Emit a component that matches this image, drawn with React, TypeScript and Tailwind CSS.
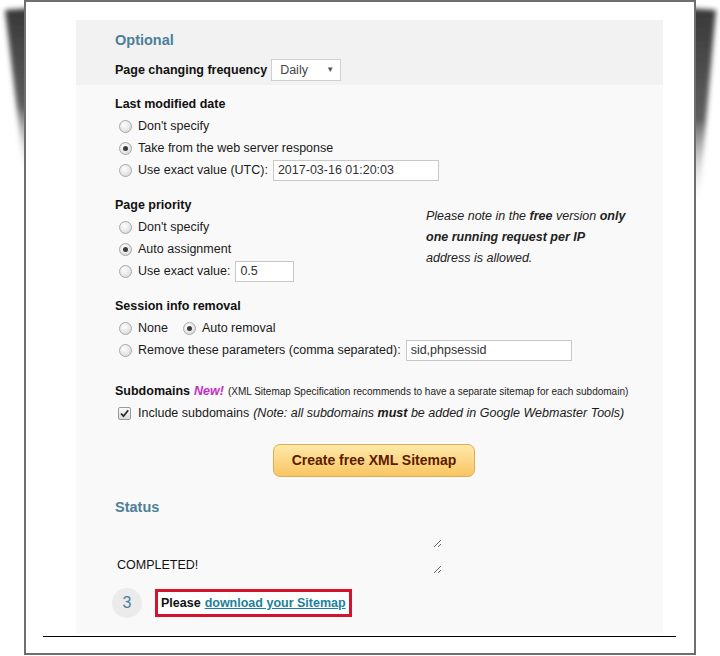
import React from "react";

const Radio = ({ checked }: { checked?: boolean }) => (
  <span className="inline-flex h-[13px] w-[13px] shrink-0 items-center justify-center rounded-full border border-[#a8a8a8] bg-[radial-gradient(circle_at_40%_35%,#ffffff,#d2d2d2)]">
    {checked && <span className="h-[5px] w-[5px] rounded-full bg-[#3c3c3c]" />}
  </span>
);

const Checkbox = () => (
  <span className="inline-flex h-[13px] w-[13px] shrink-0 items-center justify-center rounded-[2px] border border-[#9a9a9a] bg-[linear-gradient(#fafafa,#dcdcdc)]">
    <svg width="11" height="11" viewBox="0 0 11 11">
      <path d="M2 5.5 L4.5 8.2 L9.2 2.2" fill="none" stroke="#2a2a2a" strokeWidth="1.8" />
    </svg>
  </span>
);

const RadioRow = ({ checked, children }: { checked?: boolean; children: React.ReactNode }) => (
  <div className="flex h-[22px] items-center pl-[4px]">
    <Radio checked={checked} />
    <span className="ml-[6px] flex items-center whitespace-nowrap">{children}</span>
  </div>
);

const Heading = ({ children }: { children: React.ReactNode }) => (
  <div className="h-[20px] text-[12.5px] font-bold leading-[20px] text-[#111]">{children}</div>
);

export default function App() {
  return (
    <div className="relative h-[656px] w-[720px] overflow-hidden bg-white font-['Liberation_Sans',Arial,sans-serif] text-[12.5px] text-[#1a1a1a]">
      {/* curl shadows behind frame */}
      <svg className="absolute left-0 top-0" width="720" height="656">
        <defs>
          <filter id="sh" x="-50%" y="-50%" width="200%" height="200%">
            <feGaussianBlur stdDeviation="2.5" />
          </filter>
          <linearGradient id="gl" x1="0" y1="0" x2="0" y2="1">
            <stop offset="0" stopColor="#383838" />
            <stop offset="0.55" stopColor="#5e5e5e" />
            <stop offset="1" stopColor="#ffffff" stopOpacity="0" />
          </linearGradient>
        </defs>
        <polygon points="5,10 34,8 34,185 26,185" fill="url(#gl)" filter="url(#sh)" />
        <polygon points="686,8 716,10 698,210 686,210" fill="url(#gl)" filter="url(#sh)" />
      </svg>

      <div className="relative ml-[24px] h-[655px] w-[672px] border-2 border-[#6e6e6e] bg-white">
        <div className="ml-[17px] w-[633px] pt-[18px]">
          <div className="ml-[33px] w-[587px] bg-[#f9f9f9]">
            {/* header band */}
            <div className="bg-[#f2f2f2] pb-[4px] pl-[39px] pt-[10px]">
              <div className="h-[20px] text-[14.5px] font-bold leading-[20px] text-[#4d7f99]">Optional</div>
              <div className="mt-[9px] flex h-[22px] items-center">
                <span className="font-bold text-[#111]">Page changing frequency</span>
                <div className="ml-[4px] flex h-[22px] w-[70px] items-center justify-between border border-[#cfcfcf] bg-white pl-[8px] pr-[6px] text-[#444]">
                  <span>Daily</span>
                  <span className="text-[8px] text-[#555]">▼</span>
                </div>
              </div>
            </div>

            <div className="pl-[39px] pt-[9px]">
              <Heading>Last modified date</Heading>
              <div className="mt-[1px]">
                <RadioRow>Don't specify</RadioRow>
                <RadioRow checked>Take from the web server response</RadioRow>
                <RadioRow>
                  Use exact value (UTC):
                  <span className="ml-[5px] flex h-[21px] w-[166px] items-center border border-[#c8c8c8] bg-white px-[4px] text-[#333]">
                    2017-03-16 01:20:03
                  </span>
                </RadioRow>
              </div>

              <div className="mt-[14px] flex">
                <div className="w-[311px]">
                  <Heading>Page priority</Heading>
                  <div className="mt-[1px]">
                    <RadioRow>Don't specify</RadioRow>
                    <RadioRow checked>Auto assignment</RadioRow>
                    <RadioRow>
                      Use exact value:
                      <span className="ml-[5px] flex h-[21px] w-[59px] items-center border border-[#c8c8c8] bg-white px-[4px] text-[#333]">
                        0.5
                      </span>
                    </RadioRow>
                  </div>
                </div>
                <div className="mt-[11px] whitespace-nowrap italic leading-[21px] text-[#222]">
                  Please note in the <b>free</b> version <b>only</b>
                  <br />
                  <b>one running request per IP</b>
                  <br />
                  address is allowed.
                </div>
              </div>

              <div className="mt-[14px]">
                <Heading>Session info removal</Heading>
                <div className="mt-[1px]">
                  <div className="flex h-[22px] items-center pl-[4px]">
                    <Radio />
                    <span className="ml-[6px]">None</span>
                    <span className="ml-[15px] flex">
                      <Radio checked />
                    </span>
                    <span className="ml-[6px]">Auto removal</span>
                  </div>
                  <RadioRow>
                    Remove these parameters (comma separated):
                    <span className="ml-[5px] flex h-[21px] w-[166px] items-center border border-[#c8c8c8] bg-white px-[4px] text-[#333]">
                      sid,phpsessid
                    </span>
                  </RadioRow>
                </div>
              </div>

              <div className="mt-[20px]">
                <div className="flex h-[20px] items-center whitespace-nowrap">
                  <span className="font-bold text-[#111]">Subdomains</span>
                  <span className="ml-[4px] font-bold italic text-[#c22ec2]">New!</span>
                  <span className="ml-[4px] text-[10px] text-[#222]">
                    (XML Sitemap Specification recommends to have a separate sitemap for each subdomain)
                  </span>
                </div>
                <div className="mt-[1px] flex h-[22px] items-center whitespace-nowrap pl-[3px]">
                  <Checkbox />
                  <span className="ml-[7px]">Include subdomains</span>
                  <span className="ml-[4px] italic">
                    (Note: all subdomains <b>must</b> be added in Google Webmaster Tools)
                  </span>
                </div>
              </div>

              <div className="mt-[20px] pl-[158px]">
                <button className="flex h-[33px] w-[202px] items-center justify-center rounded-[7px] border border-[#dfae52] bg-[linear-gradient(#fee9a9,#f9c563)] text-[14px] font-bold text-[#5a1c02]">
                  Create free XML Sitemap
                </button>
              </div>

              <div className="mt-[20px] h-[20px] text-[14.5px] font-bold leading-[20px] text-[#4d7f99]">Status</div>

              <textarea
                readOnly
                className="mt-[1px] block h-[30px] w-[327px] resize border-0 bg-transparent p-[2px] outline-none"
                value=""
              />
              <textarea
                readOnly
                className="mt-[4px] block h-[22px] w-[327px] resize overflow-hidden border-0 bg-transparent px-[2px] pt-[5px] font-['Liberation_Sans',Arial,sans-serif] text-[12.5px] leading-[16px] text-[#111] outline-none"
                value="COMPLETED!"
              />

              <div className="mt-[14px] flex items-center pb-[15px]">
                <div className="-ml-[3px] flex h-[30px] w-[30px] items-center justify-center rounded-full bg-[#ebebeb] text-[16px] text-[#4d7f99]">
                  3
                </div>
                <div className="ml-[13px] flex h-[28px] items-center whitespace-nowrap border-[3px] border-[#d4132c] bg-white px-[3px] font-bold">
                  <span className="text-[#111]">Please</span>
                  <a href="#" className="ml-[4px] text-[#1c7f9c] underline">
                    download your Sitemap
                  </a>
                </div>
              </div>
            </div>
          </div>
          <div className="mt-[3px] h-[1px] w-[633px] bg-black" />
        </div>
      </div>
    </div>
  );
}
